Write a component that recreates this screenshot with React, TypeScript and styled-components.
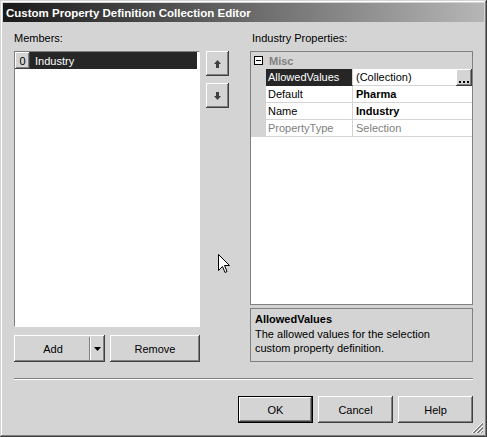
import React from "react";
import styled, { createGlobalStyle, css } from "styled-components";

const GlobalStyle = createGlobalStyle`
  html, body { margin: 0; padding: 0; background: #d4d4d4; }
  body { font-family: "Liberation Sans", Arial, sans-serif; font-size: 11px; color: #000; }
  * { box-sizing: border-box; }
`;

const raised = css`
  background: #d4d4d4;
  box-shadow: inset -1px -1px #404040, inset 1px 1px #ffffff, inset -2px -2px #808080, inset 2px 2px #d4d4d4;
`;

const Window = styled.div`
  position: relative;
  width: 487px;
  height: 437px;
  padding: 3px;
  background: #d4d4d4;
  display: flex;
  flex-direction: column;
  box-shadow: inset -1px -1px #404040, inset 1px 1px #d4d4d4, inset -2px -2px #808080, inset 2px 2px #ffffff;
  overflow: hidden;
`;

const TitleBar = styled.div`
  height: 19px;
  flex: none;
  display: flex;
  align-items: center;
  padding-left: 3px;
  background: linear-gradient(to right, #1a1a1a, #b6b6b6);
  color: #fff;
  font-weight: bold;
  font-size: 11.5px;
  white-space: nowrap;
`;

const Body = styled.div`
  flex: 1;
  display: flex;
  flex-direction: column;
  padding: 10px 11px 11px;
`;

const LabelRow = styled.div`
  display: flex;
  height: 13px;
  line-height: 13px;
  margin-bottom: 6px;
`;

const Label = styled.div<{ $w?: number; $pl?: number }>`
  width: ${(p) => (p.$w ? `${p.$w}px` : "auto")};
  padding-left: ${(p) => p.$pl ?? 0}px;
  white-space: nowrap;
`;

const Main = styled.div`
  display: flex;
  height: 311px;
`;

const LeftCol = styled.div`
  width: 186px;
  display: flex;
  flex-direction: column;
`;

const ListBox = styled.div`
  flex: 1;
  background: #fff;
  border: 1px solid;
  border-color: #808080 #ffffff #ffffff #808080;
  padding: 0 2px 0 0;
`;

const ListRow = styled.div`
  height: 17px;
  display: flex;
  align-items: center;
  background: #262626;
  color: #fff;
`;

const IndexCell = styled.div`
  ${raised}
  width: 15px;
  height: 17px;
  flex: none;
  display: flex;
  align-items: center;
  justify-content: center;
  color: #000;
`;

const ItemText = styled.span`
  padding-left: 5px;
`;

const ButtonRow = styled.div`
  margin-top: 8px;
  height: 27px;
  display: flex;
  gap: 5px;
`;

const Button = styled.button<{ $w: number; $default?: boolean }>`
  ${raised}
  width: ${(p) => p.$w}px;
  height: 27px;
  border: none;
  padding: 0;
  font: inherit;
  color: #000;
  display: flex;
  align-items: center;
  justify-content: center;
  ${(p) =>
    p.$default &&
    css`
      box-shadow: inset 0 0 0 1px #000, inset -2px -2px #404040, inset 2px 2px #ffffff, inset -3px -3px #808080;
    `}
`;

const SplitButton = styled.div`
  ${raised}
  width: 91px;
  height: 27px;
  display: flex;
`;

const SplitMain = styled.div`
  width: 76px;
  display: flex;
  align-items: center;
  justify-content: center;
  box-shadow: inset -1px 0 #808080;
  margin: 2px 0;
  padding-left: 2px;
`;

const SplitArrow = styled.div`
  flex: 1;
  display: flex;
  align-items: center;
  justify-content: center;
  border-left: 1px solid #fff;
  margin: 2px 2px 2px 0;
  padding-top: 1px;
`;

const MoveCol = styled.div`
  margin-left: 6px;
  width: 23px;
  display: flex;
  flex-direction: column;
  gap: 7px;
`;

const MoveButton = styled.div`
  ${raised}
  width: 23px;
  height: 25px;
  display: flex;
  align-items: center;
  justify-content: center;
`;

const RightCol = styled.div`
  margin-left: 21px;
  width: 223px;
  display: flex;
  flex-direction: column;
`;

const PropGrid = styled.div`
  height: 254px;
  flex: none;
  border: 1px solid #808080;
  background: #fff;
  display: flex;
  flex-direction: column;
`;

const CategoryRow = styled.div`
  height: 17px;
  flex: none;
  background: #d4d4d4;
  display: flex;
  align-items: center;
  color: #808080;
  font-weight: bold;
`;

const MinusBox = styled.div`
  width: 9px;
  height: 9px;
  margin: 0 6px 0 3px;
  border: 1px solid #000;
  background: #fff;
  position: relative;
  &::after {
    content: "";
    position: absolute;
    left: 1px;
    top: 3px;
    width: 5px;
    height: 1px;
    background: #000;
  }
`;

const PropRow = styled.div`
  height: 17px;
  flex: none;
  display: grid;
  grid-template-columns: 15px 87px 1fr;
`;

const Margin = styled.div`
  background: #d4d4d4;
`;

const NameCell = styled.div<{ $selected?: boolean; $dim?: boolean }>`
  padding-left: 2px;
  border-right: 1px solid #d4d4d4;
  border-bottom: 1px solid #d4d4d4;
  display: flex;
  align-items: center;
  white-space: nowrap;
  color: ${(p) => (p.$selected ? "#fff" : p.$dim ? "#808080" : "#000")};
  background: ${(p) => (p.$selected ? "#262626" : "#fff")};
  ${(p) => p.$selected && css`border-bottom-color: #262626;`}
`;

const ValueCell = styled.div<{ $bold?: boolean; $dim?: boolean }>`
  padding-left: 3px;
  border-bottom: 1px solid #d4d4d4;
  display: flex;
  align-items: center;
  justify-content: space-between;
  white-space: nowrap;
  font-weight: ${(p) => (p.$bold ? "bold" : "normal")};
  color: ${(p) => (p.$dim ? "#808080" : "#000")};
`;

const EllipsisButton = styled.div`
  width: 16px;
  height: 17px;
  align-self: stretch;
  margin-bottom: -1px;
  background: #d4d4d4;
  box-shadow: inset -1px -1px #404040, inset 1px 1px #ffffff, inset -2px -2px #808080;
  display: flex;
  align-items: flex-end;
  justify-content: center;
  gap: 2px;
  padding-bottom: 3px;
  padding-right: 1px;
`;

const Dot = styled.span`
  width: 2px;
  height: 2px;
  background: #000;
`;

const Description = styled.div`
  margin-top: 3px;
  flex: 1;
  border: 1px solid #808080;
  background: #d4d4d4;
  padding: 3px 4px;
`;

const DescTitle = styled.div`
  font-weight: bold;
  line-height: 15px;
`;

const DescText = styled.div`
  line-height: 14px;
`;

const Separator = styled.div`
  margin-top: 16px;
  border-top: 1px solid #808080;
  border-bottom: 1px solid #ffffff;
`;

const Footer = styled.div`
  margin-top: 16px;
  display: flex;
  justify-content: flex-end;
  gap: 5px;
`;

const Cursor = styled.svg`
  position: absolute;
  left: 218px;
  top: 254px;
`;

const Grip = styled.svg`
  position: absolute;
  right: 3px;
  bottom: 3px;
`;

const UpArrow = () => (
  <svg width="7" height="8" viewBox="0 0 7 8">
    <polygon points="3.5,0 7,4 0,4" fill="#404040" />
    <rect x="2" y="4" width="3" height="4" fill="#404040" />
  </svg>
);

const DownArrow = () => (
  <svg width="7" height="8" viewBox="0 0 7 8">
    <rect x="2" y="0" width="3" height="4" fill="#404040" />
    <polygon points="0,4 7,4 3.5,8" fill="#404040" />
  </svg>
);

const props = [
  { name: "Default", value: "Pharma", bold: true },
  { name: "Name", value: "Industry", bold: true },
  { name: "PropertyType", value: "Selection", dim: true },
];

export default function App() {
  return (
    <>
      <GlobalStyle />
      <Window>
        <TitleBar>Custom Property Definition Collection Editor</TitleBar>
        <Body>
          <LabelRow>
            <Label $w={236}>Members:</Label>
            <Label $pl={2}>Industry Properties:</Label>
          </LabelRow>
          <Main>
            <LeftCol>
              <ListBox>
                <ListRow>
                  <IndexCell>0</IndexCell>
                  <ItemText>Industry</ItemText>
                </ListRow>
              </ListBox>
              <ButtonRow>
                <SplitButton>
                  <SplitMain>Add</SplitMain>
                  <SplitArrow>
                    <svg width="7" height="4" viewBox="0 0 7 4">
                      <polygon points="0,0 7,0 3.5,4" fill="#000" />
                    </svg>
                  </SplitArrow>
                </SplitButton>
                <Button $w={90}>Remove</Button>
              </ButtonRow>
            </LeftCol>
            <MoveCol>
              <MoveButton>
                <UpArrow />
              </MoveButton>
              <MoveButton>
                <DownArrow />
              </MoveButton>
            </MoveCol>
            <RightCol>
              <PropGrid>
                <CategoryRow>
                  <MinusBox />
                  Misc
                </CategoryRow>
                <PropRow>
                  <Margin />
                  <NameCell $selected>AllowedValues</NameCell>
                  <ValueCell>
                    (Collection)
                    <EllipsisButton>
                      <Dot />
                      <Dot />
                      <Dot />
                    </EllipsisButton>
                  </ValueCell>
                </PropRow>
                {props.map((p) => (
                  <PropRow key={p.name}>
                    <Margin />
                    <NameCell $dim={p.dim}>{p.name}</NameCell>
                    <ValueCell $bold={p.bold} $dim={p.dim}>
                      {p.value}
                    </ValueCell>
                  </PropRow>
                ))}
              </PropGrid>
              <Description>
                <DescTitle>AllowedValues</DescTitle>
                <DescText>
                  The allowed values for the selection
                  <br />
                  custom property definition.
                </DescText>
              </Description>
            </RightCol>
          </Main>
          <Separator />
          <Footer>
            <Button $w={75} $default>
              OK
            </Button>
            <Button $w={75}>Cancel</Button>
            <Button $w={75}>Help</Button>
          </Footer>
        </Body>
        <Cursor width="12" height="20" viewBox="0 0 12 20">
          <polygon
            points="0.5,0.5 0.5,16.5 4.5,12.5 7,18.5 9,17.5 6.5,11.5 11.5,11.5"
            fill="#fff"
            stroke="#000"
            strokeWidth="1"
          />
        </Cursor>
        <Grip width="12" height="12" viewBox="0 0 12 12">
          <g strokeWidth="1">
            <line x1="11" y1="1" x2="1" y2="11" stroke="#808080" />
            <line x1="11" y1="2" x2="2" y2="11" stroke="#808080" />
            <line x1="11" y1="0" x2="0" y2="11" stroke="#fff" />
            <line x1="11" y1="5" x2="5" y2="11" stroke="#808080" />
            <line x1="11" y1="6" x2="6" y2="11" stroke="#808080" />
            <line x1="11" y1="4" x2="4" y2="11" stroke="#fff" />
            <line x1="11" y1="9" x2="9" y2="11" stroke="#808080" />
            <line x1="11" y1="8" x2="8" y2="11" stroke="#fff" />
          </g>
        </Grip>
      </Window>
    </>
  );
}
